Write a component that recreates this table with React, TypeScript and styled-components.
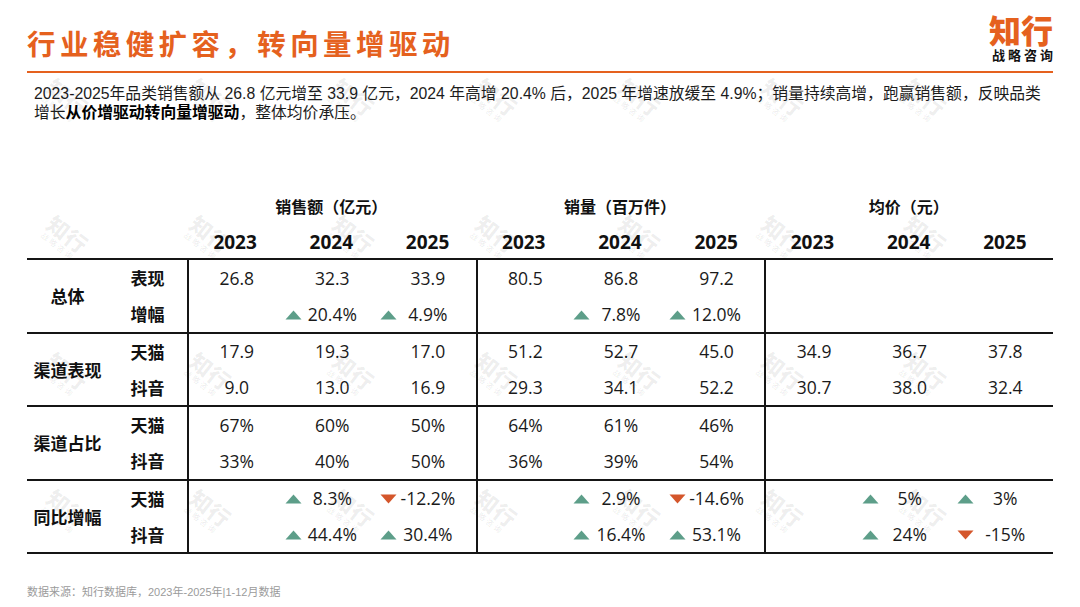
import React from 'react';
import styled, { createGlobalStyle } from 'styled-components';

type Trend = 'up' | 'down';
interface CellValue {
  v: string;
  t?: Trend;
}
type GroupRow = (CellValue | null)[];

interface RowData {
  name: string;
  groups: GroupRow[];
}

interface BlockData {
  label: string;
  rows: RowData[];
}

const n = (v: string): CellValue => ({ v });
const up = (v: string): CellValue => ({ v, t: 'up' });
const dn = (v: string): CellValue => ({ v, t: 'down' });
const empty: GroupRow = [null, null, null];

const groups = [
  { title: '销售额（亿元）', years: ['2023', '2024', '2025'] },
  { title: '销量（百万件）', years: ['2023', '2024', '2025'] },
  { title: '均价（元）', years: ['2023', '2024', '2025'] },
];

const blocks: BlockData[] = [
  {
    label: '总体',
    rows: [
      { name: '表现', groups: [[n('26.8'), n('32.3'), n('33.9')], [n('80.5'), n('86.8'), n('97.2')], empty] },
      { name: '增幅', groups: [[null, up('20.4%'), up('4.9%')], [null, up('7.8%'), up('12.0%')], empty] },
    ],
  },
  {
    label: '渠道表现',
    rows: [
      {
        name: '天猫',
        groups: [[n('17.9'), n('19.3'), n('17.0')], [n('51.2'), n('52.7'), n('45.0')], [n('34.9'), n('36.7'), n('37.8')]],
      },
      {
        name: '抖音',
        groups: [[n('9.0'), n('13.0'), n('16.9')], [n('29.3'), n('34.1'), n('52.2')], [n('30.7'), n('38.0'), n('32.4')]],
      },
    ],
  },
  {
    label: '渠道占比',
    rows: [
      { name: '天猫', groups: [[n('67%'), n('60%'), n('50%')], [n('64%'), n('61%'), n('46%')], empty] },
      { name: '抖音', groups: [[n('33%'), n('40%'), n('50%')], [n('36%'), n('39%'), n('54%')], empty] },
    ],
  },
  {
    label: '同比增幅',
    rows: [
      { name: '天猫', groups: [[null, up('8.3%'), dn('-12.2%')], [null, up('2.9%'), dn('-14.6%')], [null, up('5%'), up('3%')]] },
      { name: '抖音', groups: [[null, up('44.4%'), up('30.4%')], [null, up('16.4%'), up('53.1%')], [null, up('24%'), dn('-15%')]] },
    ],
  },
];

const ORANGE = '#e5611e';
const LINE = '#151515';
const ROW_H = '35.75px';

const GlobalStyle = createGlobalStyle`
  html, body {
    margin: 0;
    padding: 0;
    background: #ffffff;
  }
  body {
    font-family: "Liberation Sans", "Noto Sans CJK SC", sans-serif;
    color: #1a1a1a;
  }
  * { box-sizing: border-box; }
`;

const Page = styled.div`
  position: relative;
  width: 1080px;
  height: 607px;
  overflow: hidden;
  padding: 0 27px;
  display: flex;
  flex-direction: column;
  background: #fff;
`;

const Header = styled.header`
  display: flex;
  justify-content: space-between;
  align-items: flex-start;
  padding-top: 12px;
  padding-bottom: 8px;
  border-bottom: 2px solid ${ORANGE};
`;

const Title = styled.h1`
  margin: 11px 0 0;
  font-family: "Noto Sans CJK SC", sans-serif;
  font-size: 28.5px;
  font-weight: 700;
  letter-spacing: 4.4px;
  line-height: 40px;
  color: ${ORANGE};
`;

const Logo = styled.div`
  display: flex;
  flex-direction: column;
  align-items: flex-end;
  gap: 1px;
  font-family: "Noto Sans CJK SC", sans-serif;
`;

const LogoMark = styled.span`
  font-size: 32px;
  font-weight: 900;
  line-height: 34px;
  color: ${ORANGE};
`;

const LogoSub = styled.span`
  font-size: 13px;
  font-weight: 700;
  line-height: 16px;
  letter-spacing: 3px;
  margin-right: -3px;
  color: #111;
`;

const Lead = styled.p`
  margin: 11px 0 0 7px;
  font-size: 15.8px;
  line-height: 19px;
  color: #1c1c1c;
  white-space: nowrap;

  & > b {
    font-weight: 700;
    color: #000;
  }
`;

const Table = styled.div`
  margin-top: 69px;
  display: flex;
  flex-direction: column;
`;

const HeadRow = styled.div`
  display: grid;
  grid-template-columns: 160px repeat(3, 1fr);
`;

const HeadGroup = styled.div`
  display: grid;
  grid-template-columns: repeat(3, 1fr);
  grid-template-rows: 30px 37px;
`;

const GroupTitle = styled.div`
  grid-column: 1 / -1;
  display: flex;
  align-items: center;
  justify-content: center;
  font-family: "Noto Sans CJK SC", sans-serif;
  font-size: 16px;
  font-weight: 700;
  color: #111;
`;

const Year = styled.div`
  padding-top: 7px;
  line-height: 28px;
  text-align: center;
  font-family: "Open Sans", "Noto Sans CJK SC", sans-serif;
  font-size: 19px;
  font-weight: 700;
  color: #111;
`;

const Body = styled.div`
  border-top: 2px solid ${LINE};
`;

const Block = styled.div`
  display: grid;
  grid-template-columns: 160px repeat(3, 1fr);
  border-bottom: 2px solid ${LINE};
`;

const LabelPane = styled.div`
  display: grid;
  grid-template-columns: 81px 79px;
  grid-template-rows: repeat(2, ${ROW_H});
`;

const BlockLabel = styled.div`
  grid-row: 1 / 3;
  display: flex;
  align-items: center;
  justify-content: center;
  font-family: "Noto Sans CJK SC", sans-serif;
  font-size: 17px;
  font-weight: 700;
  color: #111;
`;

const RowLabel = styled.div`
  display: flex;
  align-items: center;
  justify-content: center;
  font-family: "Noto Sans CJK SC", sans-serif;
  font-size: 17px;
  font-weight: 700;
  color: #111;
`;

const GroupPane = styled.div`
  display: grid;
  grid-template-columns: repeat(3, 1fr);
  grid-template-rows: repeat(2, ${ROW_H});
  border-left: 2px solid ${LINE};
`;

const Cell = styled.div`
  display: grid;
  grid-template-columns: 20px 1fr 20px;
  align-items: center;
  font-family: "Open Sans", "Noto Sans CJK SC", sans-serif;
  font-size: 17.5px;
  color: #1a1a1a;
`;

const Marker = styled.span`
  display: flex;
  align-items: center;
  padding-top: 2px;
`;

const Value = styled.span`
  text-align: center;
  white-space: nowrap;
`;

const Footer = styled.footer`
  margin-top: 31px;
  font-size: 11px;
  line-height: 14px;
  color: #9b9b9b;
`;

const Watermarks = styled.div`
  position: absolute;
  left: -6px;
  top: 31px;
  display: grid;
  grid-template-columns: repeat(7, 143px);
  grid-auto-rows: 137px;
  pointer-events: none;
`;

const Tile = styled.div`
  display: flex;
  align-items: center;
  justify-content: center;
`;

const Stamp = styled.div`
  display: flex;
  flex-direction: column;
  align-items: center;
  transform: rotate(38deg);
  font-family: "Noto Sans CJK SC", sans-serif;
  color: rgba(0, 0, 0, 0.065);
`;

const StampMark = styled.span`
  font-size: 22px;
  font-weight: 900;
  line-height: 24px;
`;

const StampSub = styled.span`
  font-size: 8px;
  font-weight: 700;
  letter-spacing: 2px;
  line-height: 10px;
`;

const Triangle = ({ t }: { t: Trend }) =>
  t === 'up' ? (
    <svg width="17" height="10" viewBox="0 0 17 10">
      <polygon points="8.5,0.5 16.5,9.5 0.5,9.5" fill="#5d9e89" />
    </svg>
  ) : (
    <svg width="17" height="10" viewBox="0 0 17 10">
      <polygon points="0.5,0.5 16.5,0.5 8.5,9.5" fill="#d4562b" />
    </svg>
  );

const ValueCell = ({ cell }: { cell: CellValue | null }) => (
  <Cell>
    <Marker>{cell?.t && <Triangle t={cell.t} />}</Marker>
    <Value>{cell?.v ?? ''}</Value>
    <span />
  </Cell>
);

const App = () => {
  return (
    <Page>
      <GlobalStyle />
      <Header>
        <Title>行业稳健扩容，转向量增驱动</Title>
        <Logo>
          <LogoMark>知行</LogoMark>
          <LogoSub>战略咨询</LogoSub>
        </Logo>
      </Header>

      <Lead>
        2023-2025年品类销售额从 26.8 亿元增至 33.9 亿元，2024 年高增 20.4% 后，2025 年增速放缓至 4.9%；销量持续高增，跑赢销售额，反映品类
        <br />
        增长<b>从价增驱动转向量增驱动</b>，整体均价承压。
      </Lead>

      <Table>
        <HeadRow>
          <div />
          {groups.map((g) => (
            <HeadGroup key={g.title}>
              <GroupTitle>{g.title}</GroupTitle>
              {g.years.map((y) => (
                <Year key={y}>{y}</Year>
              ))}
            </HeadGroup>
          ))}
        </HeadRow>
        <Body>
          {blocks.map((b) => (
            <Block key={b.label}>
              <LabelPane>
                <BlockLabel>{b.label}</BlockLabel>
                {b.rows.map((r) => (
                  <RowLabel key={r.name}>{r.name}</RowLabel>
                ))}
              </LabelPane>
              {[0, 1, 2].map((gi) => (
                <GroupPane key={gi}>
                  {b.rows.map((r, ri) =>
                    r.groups[gi].map((c, ci) => <ValueCell key={`${ri}-${ci}`} cell={c} />),
                  )}
                </GroupPane>
              ))}
            </Block>
          ))}
        </Body>
      </Table>

      <Footer>数据来源：知行数据库，2023年-2025年|1-12月数据</Footer>

      <Watermarks>
        {Array.from({ length: 28 }).map((_, i) => (
          <Tile key={i}>
            <Stamp>
              <StampMark>知行</StampMark>
              <StampSub>战略咨询</StampSub>
            </Stamp>
          </Tile>
        ))}
      </Watermarks>
    </Page>
  );
};

export default App;
